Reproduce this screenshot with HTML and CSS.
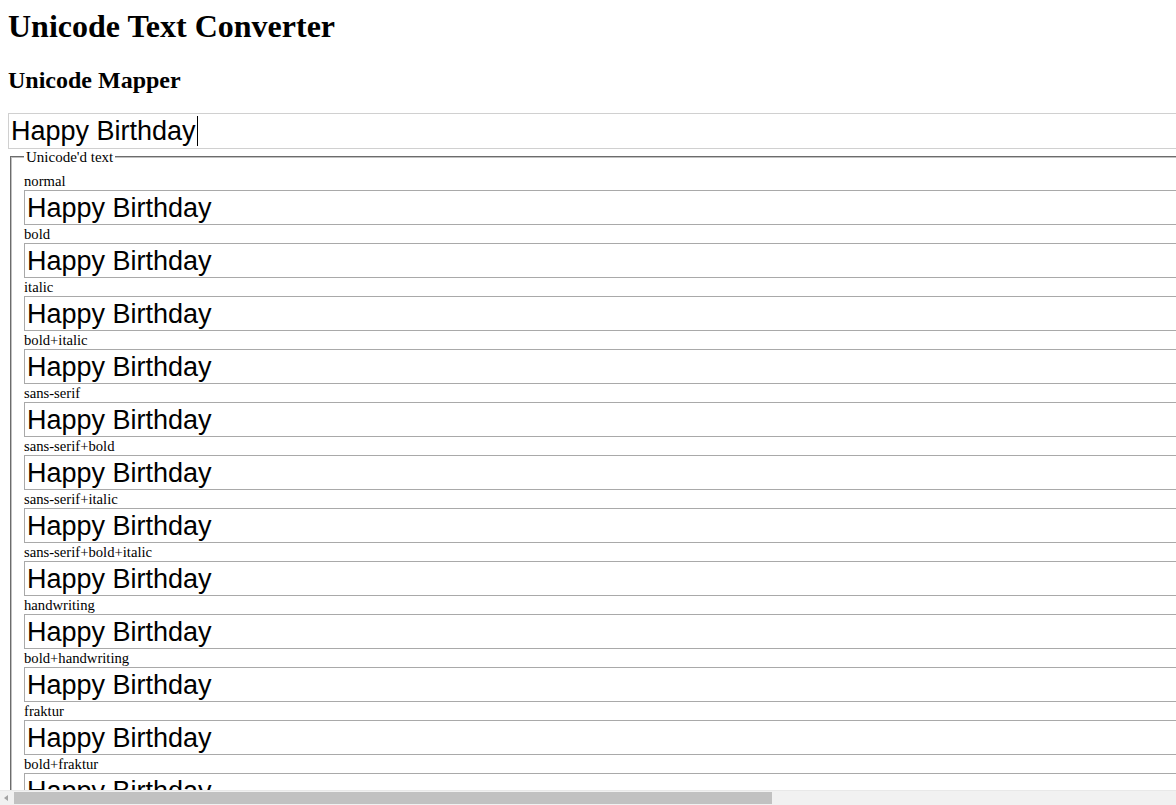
FILE: index.html
```html
<!DOCTYPE html>
<html>
<head>
<meta charset="utf-8">
<title>Unicode Text Converter</title>
<link rel="stylesheet" href="styles.css">
</head>
<body>
<h1 class="title">Unicode Text Converter</h1>
<h2 class="subtitle">Unicode Mapper</h2>
<div class="source-wrap">
<input class="source" type="text" value="Happy Birthday">
<span class="caret" aria-hidden="true"></span>
</div>
<fieldset class="results">
<legend class="results-legend">Unicode'd text</legend>
<div class="row"><label class="row-label">normal</label><input class="out" type="text" value="Happy Birthday" readonly></div>
<div class="row"><label class="row-label">bold</label><input class="out" type="text" value="Happy Birthday" readonly></div>
<div class="row"><label class="row-label">italic</label><input class="out" type="text" value="Happy Birthday" readonly></div>
<div class="row"><label class="row-label">bold+italic</label><input class="out" type="text" value="Happy Birthday" readonly></div>
<div class="row"><label class="row-label">sans-serif</label><input class="out" type="text" value="Happy Birthday" readonly></div>
<div class="row"><label class="row-label">sans-serif+bold</label><input class="out" type="text" value="Happy Birthday" readonly></div>
<div class="row"><label class="row-label">sans-serif+italic</label><input class="out" type="text" value="Happy Birthday" readonly></div>
<div class="row"><label class="row-label">sans-serif+bold+italic</label><input class="out" type="text" value="Happy Birthday" readonly></div>
<div class="row"><label class="row-label">handwriting</label><input class="out" type="text" value="Happy Birthday" readonly></div>
<div class="row"><label class="row-label">bold+handwriting</label><input class="out" type="text" value="Happy Birthday" readonly></div>
<div class="row"><label class="row-label">fraktur</label><input class="out" type="text" value="Happy Birthday" readonly></div>
<div class="row"><label class="row-label">bold+fraktur</label><input class="out" type="text" value="Happy Birthday" readonly></div>
<div class="row"><label class="row-label">double-struck</label><input class="out" type="text" value="Happy Birthday" readonly></div>
<div class="row"><label class="row-label">monospace</label><input class="out" type="text" value="Happy Birthday" readonly></div>
</fieldset>
<div class="hscroll" aria-hidden="true">
<span class="hscroll-arrow"></span>
<span class="hscroll-thumb"></span>
</div>
</body>
</html>
```
FILE: styles.css
```css
html {
  overflow: hidden;
}
body {
  margin: 8px 0 8px 8px;
  height: 789px;
  overflow: hidden;
  font-family: "Liberation Serif", "Times New Roman", serif;
  color: #000;
  background: #fff;
}
.title {
  font-size: 32px;
  font-weight: bold;
  margin: 0 0 21px;
  line-height: 37px;
}
.subtitle {
  font-size: 24px;
  font-weight: bold;
  margin: 0 0 19px;
  line-height: 28px;
}
.source-wrap {
  position: relative;
  width: 1737px;
}
.caret {
  position: absolute;
  left: 189px;
  top: 3px;
  width: 1px;
  height: 30px;
  background: #000;
}
.source,
.out {
  display: block;
  box-sizing: border-box;
  width: 1737px;
  margin: 0;
  padding: 1px 2px;
  font-family: "Liberation Sans", Arial, sans-serif;
  font-size: 27px;
  color: #000;
  background: #fff;
  outline: none;
}
.source {
  height: 36px;
  border: 1px solid #d0d0d0;
}
.out {
  height: 35px;
  padding: 2px 2px 0;
  border: 1px solid #a9a9a9;
}
.results {
  width: max-content;
  margin: 0 2px;
  padding: 7px 12px 9px;
  border: 2px groove #c0c0c0;
  font-size: 14.67px;
}
.results-legend {
  padding: 0 2px;
  font-size: 15px;
  line-height: 16px;
}
.row-label {
  display: block;
  line-height: 18px;
  font-size: 14.67px;
}
.hscroll {
  position: fixed;
  left: 0;
  right: 0;
  bottom: 0;
  height: 14px;
  display: flex;
  align-items: stretch;
  background: #f1f1f1;
  border-top: 1px solid #e8e8e8;
}
.hscroll-arrow {
  width: 14px;
  position: relative;
}
.hscroll-arrow::before {
  content: "";
  position: absolute;
  left: 4px;
  top: 4px;
  border-style: solid;
  border-width: 3px 4px 3px 0;
  border-color: transparent #a3a3a3 transparent transparent;
}
.hscroll-thumb {
  width: 758px;
  margin: 1px 0;
  background: #c1c1c1;
}
```
